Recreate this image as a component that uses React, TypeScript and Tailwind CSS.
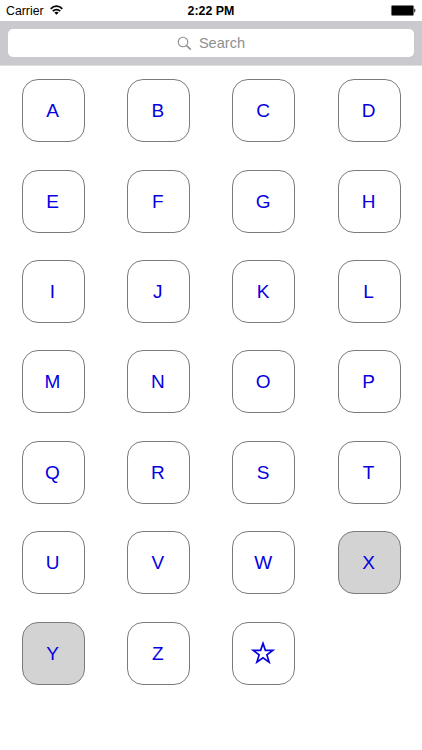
const letters = 'ABCDEFGHIJKLMNOPQRSTUVWXYZ'.split('');
const disabled = new Set(['X', 'Y']);

function StatusBar() {
  return (
    <div className="grid h-[21px] grid-cols-3 items-center text-black">
      <div className="flex items-center gap-[6px] pl-[6px]">
        <span className="text-[12.3px] leading-[18px]">Carrier</span>
        <svg width="13" height="10" viewBox="0 0 13 10" fill="none" stroke="#000" strokeWidth="1.7" className="-mt-px">
          <path d="M.7 3.9C3.9.3 9.1.3 12.3 3.9" />
          <path d="M2.8 6.2c2.1-2.2 5.3-2.2 7.4 0" />
          <path d="M6.5 9.8 4.3 7.5c1.3-1.1 3.1-1.1 4.4 0Z" fill="#000" stroke="none" />
        </svg>
      </div>
      <div className="text-center text-[12.4px] font-bold leading-[18px]">2:22 PM</div>
      <div className="flex items-center justify-end pr-[6px]">
        <svg width="26" height="11" viewBox="0 0 26 11">
          <rect x="1.4" y=".6" width="22.2" height="9.8" rx="1" fill="#000" stroke="#777" strokeWidth=".5" />
          <path d="M24.2 3.8h.8q.9 1.7 0 3.4h-.8Z" fill="#222" />
        </svg>
      </div>
    </div>
  );
}

function SearchBar() {
  return (
    <div className="h-[45px] border-b border-[#dfdfe2] bg-[#c9c9ce] px-2 pt-2">
      <div className="flex h-[28px] w-[406px] items-center justify-center gap-[7px] rounded-[5px] bg-white text-[#8e8e93]">
        <svg width="15" height="15" viewBox="0 0 15 15" fill="none" stroke="#8e8e93" strokeWidth="1.1">
          <circle cx="6" cy="6" r="4.8" />
          <path d="m9.6 9.6 4.2 4" strokeWidth="1.5" />
        </svg>
        <span className="text-[14.6px] leading-[28px]">Search</span>
      </div>
    </div>
  );
}

function Tile({ label }: { label: string }) {
  return (
    <button
      className={`flex size-[63px] items-center justify-center rounded-[16px] border border-[#7b7b7b] pr-px text-[19px] leading-none text-[#0500e0] ${
        disabled.has(label) ? 'bg-[#d3d3d3]' : 'bg-white'
      }`}
    >
      {label === '☆' ? (
        <svg width="24" height="24" viewBox="0 0 24 24" fill="none" stroke="#0500e0" strokeWidth="1.7" aria-label="Favourites">
          <path d="M12 2.4 14.4 9.4H21.8L15.9 13.9 18.1 21.1 12 16.7 5.9 21.1 8.1 13.9 2.2 9.4H9.6Z" />
        </svg>
      ) : (
        <span>{label}</span>
      )}
    </button>
  );
}

export default function App() {
  return (
    <div className="h-[750px] w-[422px] overflow-hidden bg-white font-['Liberation_Sans',Arial,sans-serif]">
      <StatusBar />
      <SearchBar />
      <div className="ml-[21.5px] mt-[13.1px] grid w-max auto-rows-[63px] grid-cols-[repeat(4,63px)] gap-x-[42.35px] gap-y-[27.45px]">
        {[...letters, '☆'].map((label) => (
          <Tile key={label} label={label} />
        ))}
      </div>
    </div>
  );
}
